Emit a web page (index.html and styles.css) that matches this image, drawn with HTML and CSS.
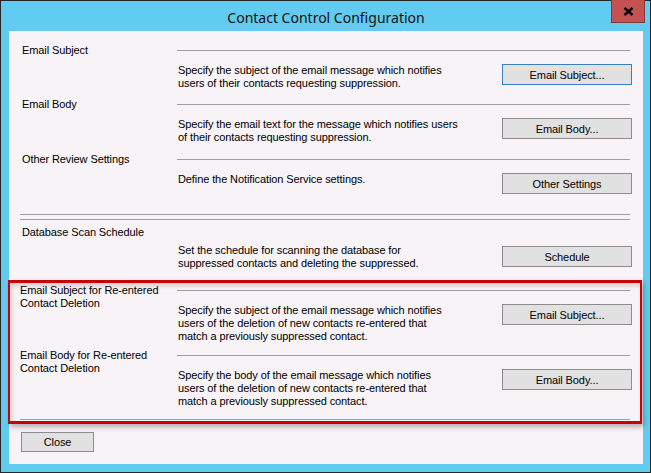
FILE: index.html
```html
<!DOCTYPE html>
<html>
<head>
    <meta charset="utf-8">
    <title>Contact Control Configuration</title>
    <link rel="stylesheet" href="styles.css">
</head>
<body>
    <div class="window">
        <div class="titlebar">
            <span class="title">Contact Control Configuration</span>
            <button class="close-x" title="Close">
                <svg width="11" height="9" viewBox="0 0 11 9">
                    <path d="M1.5 1 L9.5 8 M9.5 1 L1.5 8" stroke="#000" stroke-width="2.4" fill="none"/>
                </svg>
            </button>
        </div>

        <div class="client">
            <div class="group g-first">
                <div class="label">Email Subject</div>
                <div class="right">
                    <div class="rule"></div>
                    <div class="row">
                        <p class="desc">Specify the subject of the email message which notifies<br>users of their contacts requesting suppression.</p>
                        <button class="btn btn-focus">Email Subject...</button>
                    </div>
                </div>
            </div>

            <div class="group g-second">
                <div class="label">Email Body</div>
                <div class="right">
                    <div class="rule"></div>
                    <div class="row">
                        <p class="desc">Specify the email text for the message which notifies users<br>of their contacts requesting suppression.</p>
                        <button class="btn">Email Body...</button>
                    </div>
                </div>
            </div>

            <div class="group">
                <div class="label">Other Review Settings</div>
                <div class="right">
                    <div class="rule"></div>
                    <div class="row">
                        <p class="desc">Define the Notification Service settings.</p>
                        <button class="btn">Other Settings</button>
                    </div>
                </div>
            </div>

            <div class="double-rule"></div>

            <div class="group g-schedule">
                <div class="label">Database Scan Schedule</div>
                <div class="right">
                    <div class="row">
                        <p class="desc">Set the schedule for scanning the database for<br>suppressed contacts and deleting the suppressed.</p>
                        <button class="btn btn-low">Schedule</button>
                    </div>
                </div>
            </div>

            <div class="highlight">
                <div class="group g-reentry">
                    <div class="label">Email Subject for Re-entered<br>Contact Deletion</div>
                    <div class="right">
                        <div class="rule"></div>
                        <div class="row">
                            <p class="desc">Specify the subject of the email message which notifies<br>users of the deletion of new contacts re-entered that<br>match a previously suppressed contact.</p>
                            <button class="btn">Email Subject...</button>
                        </div>
                    </div>
                </div>

                <div class="group">
                    <div class="label">Email Body for Re-entered<br>Contact Deletion</div>
                    <div class="right">
                        <div class="rule"></div>
                        <div class="row">
                            <p class="desc">Specify the body of the email message which notifies<br>users of the deletion of new contacts re-entered that<br>match a previously suppressed contact.</p>
                            <button class="btn">Email Body...</button>
                        </div>
                    </div>
                </div>

                <div class="bottom-rule"></div>
            </div>

            <button class="btn btn-close">Close</button>
        </div>
    </div>
</body>
</html>
```

FILE: styles.css
```css
html, body {
    margin: 0;
    padding: 0;
}
body {
    font-family: "Liberation Sans", Arial, sans-serif;
    font-size: 11px;
    letter-spacing: -0.1px;
    color: #000;
}
.window {
    width: 651px;
    height: 473px;
    box-sizing: border-box;
    border: 1px solid #262626;
    background: #61cbf1;
    padding: 0 7px 8px 8px;
    display: flex;
    flex-direction: column;
}
.titlebar {
    height: 30px;
    position: relative;
    display: flex;
    align-items: center;
    justify-content: center;
}
.title {
    font-family: "Noto Sans", sans-serif;
    font-size: 14px;
    letter-spacing: 0;
    color: #111;
    padding-top: 2px;
}
.close-x {
    position: absolute;
    top: -1px;
    right: -2px;
    width: 34px;
    height: 23px;
    box-sizing: border-box;
    border: 1px solid #7a3b3a;
    border-top: none;
    background: #c75050;
    padding: 0;
    display: flex;
    align-items: center;
    justify-content: center;
}
.client {
    flex: 1;
    background: #f7f3f7;
    padding: 13px 11px 0 13px;
}
.group {
    display: grid;
    grid-template-columns: 155px 1fr;
}
.g-first {
    margin-bottom: 8px;
}
.g-second {
    margin-bottom: 9px;
}
.label {
    line-height: 13px;
}
.rule {
    height: 1px;
    background: #a0a0a0;
    margin: 6px 2px 13px 0;
}
.row {
    display: flex;
    align-items: flex-start;
}
.desc {
    margin: 0 0 0 1px;
    line-height: 13px;
    flex: 1;
}
.btn {
    width: 130px;
    height: 21px;
    box-sizing: border-box;
    background: #e1e1e1;
    border: 1px solid #8c8c8c;
    font-family: inherit;
    font-size: 11px;
    letter-spacing: inherit;
    color: #000;
    padding: 0;
}
.btn-focus {
    border-color: #3c7fc0;
}
.btn-low {
    margin-top: 2px;
}
.double-rule {
    height: 4px;
    border-top: 1px solid #a0a0a0;
    border-bottom: 1px solid #a0a0a0;
    margin: 20px 2px 6px -2px;
}
.g-schedule .right {
    padding-top: 18px;
}
.g-schedule {
    margin-bottom: 10px;
}
.highlight {
    border: solid #c8000a;
    border-width: 3px 2px;
    margin: 0 -10px 8px -14px;
    padding: 1px 8px 1px 12px;
    box-shadow: 2px 3px 5px rgba(0, 0, 0, 0.28), inset 2px 3px 4px rgba(0, 0, 0, 0.16);
}
.highlight .label {
    margin-left: -2px;
}
.g-reentry {
    margin-bottom: 6px;
}
.bottom-rule {
    height: 1px;
    background: #a0a0a0;
    margin: 11px 2px 0 -2px;
}
.btn-close {
    width: 73px;
    height: 20px;
    margin-left: -1px;
}
```
